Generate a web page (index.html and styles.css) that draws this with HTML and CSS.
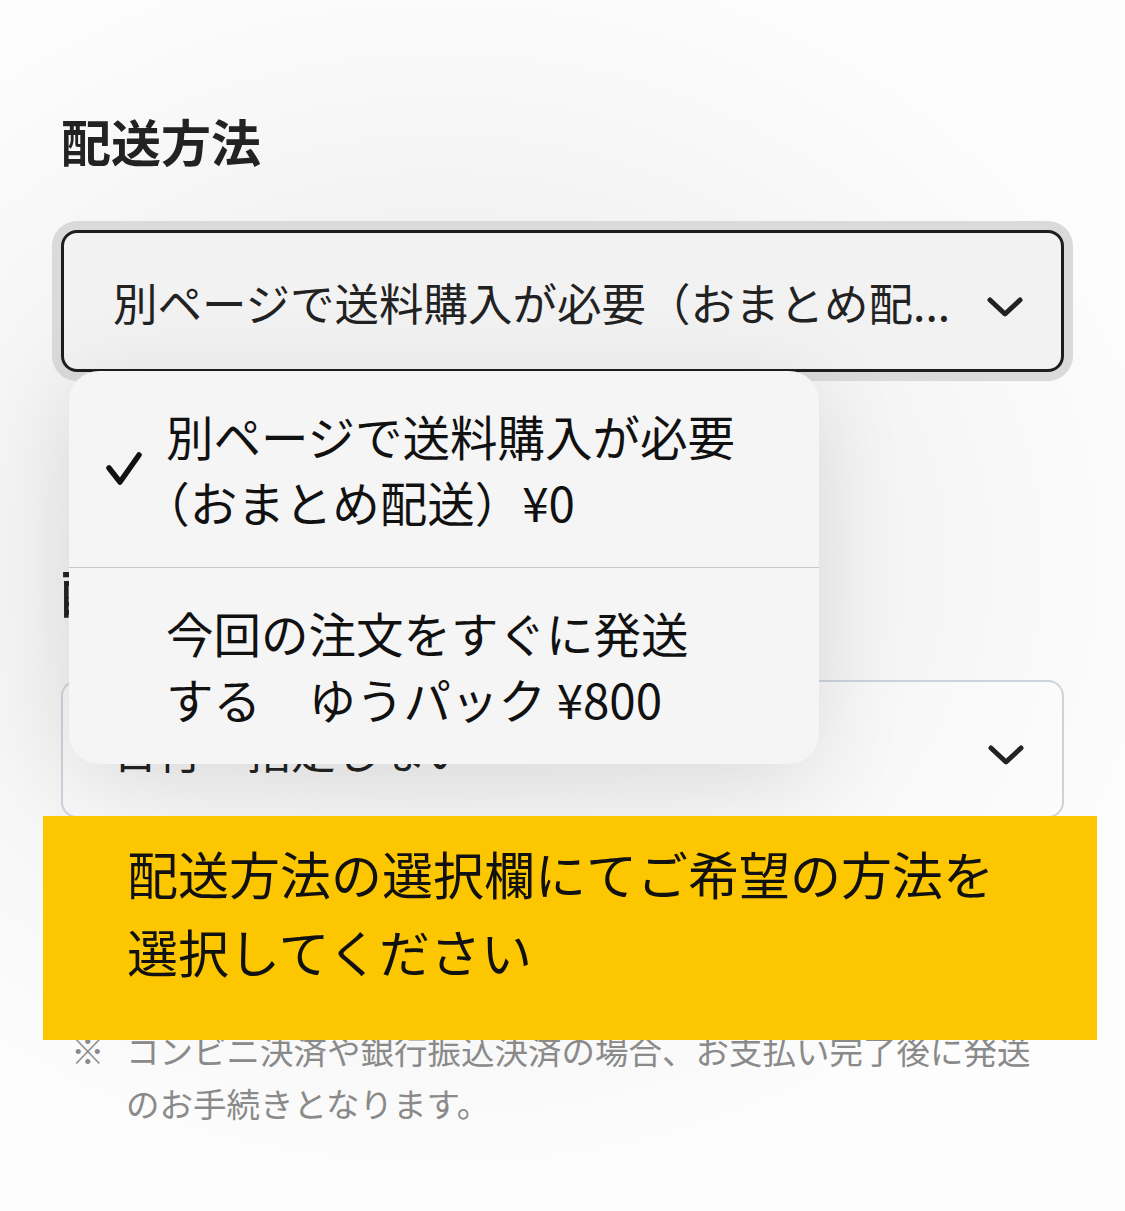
FILE: index.html
```html
<!DOCTYPE html>
<html lang="ja">
<head>
  <meta charset="UTF-8" />
  <meta name="viewport" content="width=device-width, initial-scale=1.0"/>
  <title>配送方法</title>
  <link rel="stylesheet" href="styles.css">
</head>
<body>
  <main class="page">
    <section class="field">
      <h2 class="field-title">配送方法</h2>
      <div class="select-wrap">
        <div class="select select-focus">
          <span class="select-value">別ページで送料購入が必要（おまとめ配...</span>
          <svg class="chevron" width="36" height="20" viewBox="0 0 36 20"><path d="M3 3 L18 17 L33 3" /></svg>
        </div>

        <ul class="picker">
          <li class="picker-item picker-item-selected">
            <span class="picker-check">
              <svg width="38" height="36" viewBox="0 0 38 36"><path d="M4 17 L15 31 L34 4" /></svg>
            </span>
            <span class="picker-label">別ページで送料購入が必要<br>（おまとめ配送）¥0</span>
          </li>
          <li class="picker-item">
            <span class="picker-check"></span>
            <span class="picker-label">今回の注文をすぐに発送<br>する　ゆうパック ¥800</span>
          </li>
        </ul>
      </div>
    </section>

    <section class="field field-date">
      <h2 class="field-title">配達日時</h2>
      <div class="select select-plain">
        <span class="select-value">日付　指定しない</span>
        <svg class="chevron" width="36" height="20" viewBox="0 0 36 20"><path d="M3 3 L18 17 L33 3" /></svg>
      </div>
    </section>

    <p class="note">
      <span class="note-mark">※</span>
      <span class="note-text">コンビニ決済や銀行振込決済の場合、お支払い完了後に発送のお手続きとなります。</span>
    </p>
  </main>

  <div class="toast">配送方法の選択欄にてご希望の方法を<br>選択してください</div>
</body>
</html>
```

FILE: styles.css
```css
body {
  margin: 0;
  min-height: 1211px;
  font-family: "Noto Sans CJK JP", "Noto Sans", sans-serif;
  color: #222;
  background: radial-gradient(ellipse 760px 640px at 440px 560px, #e8e8e8 0%, #efefef 40%, #f8f8f8 75%, #fdfdfd 100%);
  position: relative;
  overflow: hidden;
}

.page {
  padding: 104px 61px 0 61px;
}

.field-title {
  margin: 0;
  font-size: 50px;
  line-height: 72px;
  font-weight: 700;
  color: #222;
}

.select-wrap {
  position: relative;
  margin-top: 54px;
}

.select {
  display: flex;
  align-items: center;
  justify-content: space-between;
  box-sizing: border-box;
  width: 1003px;
  padding: 0 38px 0 49px;
  border-radius: 16px;
}

.select-focus {
  height: 142px;
  border: 3px solid #1e1e1e;
  background: #f2f2f2;
  box-shadow: 0 0 0 9px #dadada;
}

.select-plain {
  height: 138px;
  border: 2px solid #cdd3dc;
  background: rgba(255, 255, 255, 0.25);
  padding-left: 50px;
}

.select-value {
  font-size: 44.5px;
  white-space: nowrap;
  color: #222;
}

.chevron {
  margin-top: 12px;
}

.chevron path {
  fill: none;
  stroke: #222;
  stroke-width: 5;
  stroke-linecap: round;
  stroke-linejoin: round;
}

/* open option list */
.picker {
  position: absolute;
  top: 141px;
  left: 8px;
  width: 750px;
  margin: 0;
  padding: 0;
  list-style: none;
  background: #f5f5f5;
  border-radius: 30px;
  box-shadow: 0 16px 90px rgba(0, 0, 0, 0.10);
  z-index: 2;
}

.picker-item {
  display: flex;
  align-items: center;
  padding: 32px 0;
  min-height: 132px;
}

.picker-item + .picker-item {
  border-top: 1.5px solid #c8c8c8;
}

.picker-check {
  width: 97px;
  flex: none;
  display: flex;
  padding-left: 36px;
  box-sizing: border-box;
}

.picker-check path {
  fill: none;
  stroke: #111;
  stroke-width: 5.5;
  stroke-linecap: round;
  stroke-linejoin: round;
}

.picker-label {
  font-size: 47.5px;
  line-height: 66px;
  color: #111;
  text-spacing-trim: trim-start;
}

.field-date {
  margin-top: 183px;
}

.field-date .select {
  margin-top: 53px;
}

.note {
  display: flex;
  margin: 205px 12px 0 10px;
  font-size: 33.5px;
  line-height: 53px;
  color: #8a8a8a;
}

.note-mark {
  width: 55px;
  flex: none;
}

/* message banner over the page */
.toast {
  position: absolute;
  top: 816px;
  left: 43px;
  width: 1054px;
  height: 224px;
  box-sizing: border-box;
  padding: 18px 0 0 84px;
  background: #fcc700;
  color: #111;
  font-size: 51px;
  line-height: 78px;
  z-index: 3;
}
```
